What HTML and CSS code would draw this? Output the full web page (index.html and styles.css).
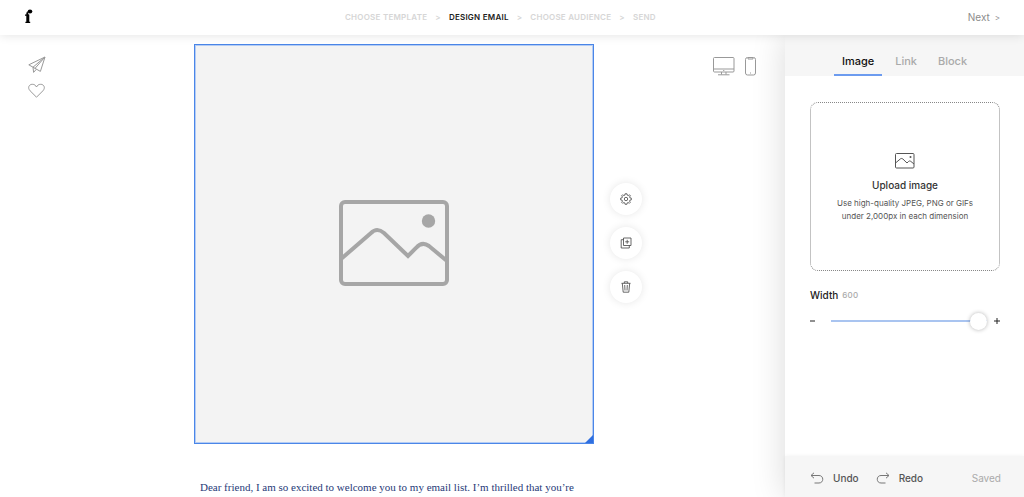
FILE: index.html
```html
<!DOCTYPE html>
<html lang="en">

<head>
    <meta charset="UTF-8">
    <meta name="viewport" content="width=device-width, initial-scale=1.0">
    <title>Design Email</title>
    <link rel="stylesheet" href="styles.css">
</head>

<body>

    <header class="topbar">
        <a class="logo" href="#" aria-label="Home">
            <svg width="9" height="15" viewBox="0 0 9 15">
                <path d="M1.400 14V12.700H2.300V6.800H1V5.500H2.300C2.300 3.800 2.700 2.800 3.500 2.300L4.600 5.500H5.300V12.700H6.200V14Z" fill="#000" />
                <ellipse cx="6" cy="2.600" rx="2.300" ry="2" fill="#000" />
            </svg>
        </a>
        <nav class="steps">
            <a href="#">CHOOSE TEMPLATE</a>
            <span>&gt;</span>
            <a class="current" href="#">DESIGN EMAIL</a>
            <span>&gt;</span>
            <a href="#">CHOOSE AUDIENCE</a>
            <span>&gt;</span>
            <a href="#">SEND</a>
        </nav>
        <a class="next" href="#">Next <span>&gt;</span></a>
    </header>

    <div class="editor">
        <main class="workspace">
            <div class="tools">
                <button class="icon-button" aria-label="Send test">
                    <svg width="18" height="18" viewBox="0 0 18 18">
                        <path d="M17 1L.8 8.8L5 11.2L12.4 15.4L17 1L5 11.2L5.6 16.4L8.4 13.2M17 1L7 12.4" />
                    </svg>
                </button>
                <button class="icon-button" aria-label="Favorite">
                    <svg width="18" height="16" viewBox="0 0 18 16">
                        <path d="M8.5 14.2L2.1 7.8C-.8 4.7 1.1 1.3 4.3 1.3C6.5 1.3 7.7 2.4 8.5 4C9.3 2.4 10.5 1.3 12.7 1.3C15.9 1.3 17.8 4.7 14.9 7.8Z" />
                    </svg>
                </button>
            </div>

            <div class="email">
                <div class="image-block">
                    <svg width="110" height="86" viewBox="0 0 110 86">
                        <rect x="2" y="2" width="106" height="82" rx="4" />
                        <path d="M2 59L32 33Q38 27 45 33L69 56L77 48Q83 41 90 46L108 61" />
                        <circle cx="89.500" cy="21" r="6.700" />
                    </svg>
                    <span class="resize"></span>
                </div>
                <p class="email-text">Dear friend, I am so excited to welcome you to my email list. I’m thrilled that you’re</p>
            </div>

            <div class="side">
                <div class="actions">
                    <button class="round-button" aria-label="Settings">
                        <svg width="12" height="12" viewBox="0 0 12 12">
                            <path d="M5 .8H7L7.300 2.200L8.300 2.600L9.500 1.800L10.400 2.800L9.500 3.900L9.900 4.800L11.300 5.100V6.900L9.900 7.200L9.500 8.100L10.300 9.300L9.300 10.300L8.200 9.500L7.200 9.900L6.900 11.300H5.100L4.800 9.900L3.800 9.500L2.700 10.300L1.700 9.300L2.500 8.100L2.100 7.200L.7 6.900V5.100L2.100 4.800L2.500 3.900L1.600 2.800L2.600 1.800L3.800 2.600L4.800 2.200Z" />
                            <circle cx="6" cy="6" r="1.700" />
                        </svg>
                    </button>
                    <button class="round-button" aria-label="Duplicate">
                        <svg width="12" height="12" viewBox="0 0 12 12">
                            <path d="M3.500 1H11V8.500H3.500ZM3.500 2.700H1.200V11H9.300V8.500M7.200 2.800V6.800M5.200 4.800H9.200" />
                        </svg>
                    </button>
                    <button class="round-button" aria-label="Delete">
                        <svg width="12" height="12" viewBox="0 0 12 12">
                            <path d="M1.500 2.300H10.500M4.300 2.300V.8H7.700V2.300M2.300 2.300L3.200 11.200H8.800L9.700 2.300M4.700 4L5 9.500M7.300 4L7 9.500" />
                        </svg>
                    </button>
                </div>
                <div class="preview">
                    <button class="icon-button" aria-label="Desktop preview">
                        <svg width="22" height="19" viewBox="0 0 22 19">
                            <rect x=".5" y=".5" width="20.500" height="14.500" rx="1" />
                            <path d="M.5 12H21M10.200 13.500H11.300M8.500 15V17.500M13 15V17.500M5 17.800H16.500" />
                        </svg>
                    </button>
                    <button class="icon-button" aria-label="Mobile preview">
                        <svg width="11" height="19" viewBox="0 0 11 19">
                            <rect x=".5" y=".5" width="10" height="17.500" rx="2" />
                            <path d="M3 1V2H8V1M5 16H6" />
                        </svg>
                    </button>
                </div>
            </div>
        </main>

        <aside class="panel">
            <nav class="tabs">
                <button class="tab active">Image</button>
                <button class="tab">Link</button>
                <button class="tab">Block</button>
            </nav>

            <div class="settings">
                <button class="upload">
                    <svg width="20" height="16" viewBox="0 0 20 16">
                        <rect x=".5" y=".5" width="18.500" height="14.500" rx="1" />
                        <path d="M.5 10L5.500 5.800Q6.700 5 7.900 6L12 10L13.500 8.500Q14.600 7.500 15.700 8.300L19 11" />
                        <circle cx="15.500" cy="4" r="1" />
                    </svg>
                    <span class="upload-title">Upload image</span>
                    <span class="upload-hint">Use high-quality JPEG, PNG or GIFs<br>under 2,000px in each dimension</span>
                </button>

                <div class="width-label">
                    <label for="width">Width</label>
                    <output for="width">600</output>
                </div>
                <div class="width-row">
                    <button class="step-button" aria-label="Decrease width">
                        <svg width="6" height="6" viewBox="0 0 6 6"><path d="M0 3H5" /></svg>
                    </button>
                    <input type="range" id="width" min="0" max="600" value="600">
                    <button class="step-button" aria-label="Increase width">
                        <svg width="6" height="6" viewBox="0 0 6 6"><path d="M0 3H6M3 0V6" /></svg>
                    </button>
                </div>
            </div>

            <footer class="history">
                <button>
                    <svg width="14" height="12" viewBox="0 0 14 12"><path d="M4 .8L1 3.500L4 6.200M1 3.500H9C14 3.500 14 11 9 11H4.500" /></svg>
                    Undo
                </button>
                <button>
                    <svg width="14" height="12" viewBox="0 0 14 12"><path d="M10 .8L13 3.500L10 6.200M13 3.500H5C0 3.500 0 11 5 11H9.500" /></svg>
                    Redo
                </button>
                <span class="saved">Saved</span>
            </footer>
        </aside>
    </div>

</body>

</html>
```
FILE: styles.css
```css
* {
    box-sizing: border-box;
}

body {
    margin: 0;
    height: 100vh;
    display: flex;
    flex-direction: column;
    overflow: hidden;
    background-color: #fff;
    color: #222;
    font-family: Inter, "Liberation Sans", sans-serif;
    font-size: 11px;
}

a {
    color: inherit;
    text-decoration: none;
}

button {
    margin: 0;
    padding: 0;
    border: none;
    background: none;
    color: inherit;
    font: inherit;
    cursor: pointer;
}

svg {
    display: block;
    fill: none;
}

/* top bar */
.topbar {
    position: relative;
    z-index: 2;
    flex: none;
    height: 35px;
    padding: 0 24px 2px;
    display: flex;
    align-items: center;
    justify-content: space-between;
    background-color: #fff;
    box-shadow: 0 0 10px rgba(0, 0, 0, 0.12);
}

.steps {
    display: flex;
    gap: 8px;
    color: #d6d6d6;
    font-size: 8px;
    font-weight: 600;
    letter-spacing: 0.03em;
}

.steps .current {
    color: #222;
}

.next {
    color: #8c8c8c;
    font-size: 10px;
}

.next span {
    margin-left: 2px;
    font-size: 8px;
}

/* editor */
.editor {
    flex: 1;
    min-height: 0;
    display: flex;
}

.workspace {
    flex: 1;
    min-width: 0;
    padding: 9px 25px 0 28px;
    display: grid;
    grid-template-columns: 1fr 400px 1fr;
    overflow: hidden;
}

.tools {
    padding-top: 12px;
    display: flex;
    flex-direction: column;
    align-items: flex-start;
    gap: 9px;
}

.icon-button svg {
    stroke: #999;
}

.image-block {
    position: relative;
    height: 400px;
    padding-bottom: 2px;
    display: flex;
    align-items: center;
    justify-content: center;
    border: 1px solid #4a86e8;
    background-color: #f3f3f3;
    box-shadow: inset 0 0 0 1px #b4ccf4;
}

.image-block svg {
    stroke: #a6a6a6;
    stroke-width: 4;
}

.image-block circle {
    fill: #a6a6a6;
    stroke: none;
}

.resize {
    position: absolute;
    right: 0;
    bottom: 0;
    border-left: 8px solid transparent;
    border-bottom: 8px solid #2f6fe0;
}

.email-text {
    margin: 35px 6px 0;
    color: #1f3a78;
    font-family: "Liberation Serif", serif;
    font-size: 11px;
    line-height: 16px;
    white-space: nowrap;
}

.side {
    display: flex;
    justify-content: space-between;
    align-items: flex-start;
}

.actions {
    margin: 139px 0 0 16px;
    display: flex;
    flex-direction: column;
    gap: 12px;
}

.round-button {
    width: 32px;
    height: 32px;
    display: flex;
    align-items: center;
    justify-content: center;
    border-radius: 50%;
    background-color: #fff;
    box-shadow: 0 0 8px rgba(0, 0, 0, 0.1);
}

.round-button svg {
    stroke: #444;
    stroke-width: 0.8;
}

.preview {
    margin: 13px 4px 0 0;
    display: flex;
    gap: 10px;
}

/* right panel */
.panel {
    position: relative;
    width: 239px;
    flex: none;
    display: flex;
    flex-direction: column;
    background-color: #fff;
    box-shadow: 0 0 32px rgba(0, 0, 0, 0.15);
}

.tabs {
    height: 41px;
    display: flex;
    align-items: flex-end;
    justify-content: center;
    gap: 5px;
    background-color: #f6f6f6;
}

.tab {
    height: 28px;
    padding: 0 8px;
    border-bottom: 2px solid transparent;
    color: #aaa;
    font-size: 11px;
    font-weight: 500;
}

.tab.active {
    border-color: #6c9bef;
    color: #111;
}

.settings {
    flex: 1;
    padding: 26px 24px 0 25px;
}

.upload {
    width: 100%;
    height: 169px;
    padding-top: 2px;
    display: flex;
    flex-direction: column;
    align-items: center;
    justify-content: center;
    border: 1px dotted #888;
    border-radius: 8px;
}

.upload svg {
    stroke: #555;
    stroke-width: 1;
}

.upload circle {
    fill: #555;
    stroke: none;
}

.upload-title {
    margin: 8px 0 4px;
    color: #333;
    font-size: 10px;
    font-weight: 500;
    line-height: 16px;
}

.upload-hint {
    color: #555;
    font-size: 8px;
    line-height: 13px;
}

.width-label {
    margin-top: 16px;
    display: flex;
    align-items: center;
    gap: 4px;
    font-size: 10px;
    font-weight: 500;
    line-height: 16px;
}

.width-label output {
    color: #aaa;
    font-size: 8px;
    letter-spacing: 0.03em;
}

.width-row {
    margin-top: 8px;
    display: flex;
    align-items: center;
    justify-content: space-between;
}

.step-button svg {
    stroke: #222;
}

.width-row input {
    flex: 1;
    height: 20px;
    margin: 0 7px 0 15px;
    -webkit-appearance: none;
    appearance: none;
    background: none;
}

.width-row input::-webkit-slider-runnable-track {
    height: 2px;
    background-color: #a9c4f0;
}

.width-row input::-webkit-slider-thumb {
    -webkit-appearance: none;
    width: 17px;
    height: 17px;
    margin-top: -7px;
    border-radius: 50%;
    background-color: #fff;
    box-shadow: 0 0 4px rgba(0, 0, 0, 0.3);
}

.history {
    height: 41px;
    padding: 3px 23px 0 25px;
    display: flex;
    align-items: center;
    gap: 17px;
    background-color: #f6f6f6;
    box-shadow: 0 0 4px rgba(0, 0, 0, 0.06);
    color: #555;
    font-size: 10px;
    font-weight: 500;
}

.history button {
    display: flex;
    align-items: center;
    gap: 9px;
}

.history svg {
    stroke: #777;
}

.saved {
    margin-left: auto;
    color: #aaa;
    font-weight: 400;
}
```
